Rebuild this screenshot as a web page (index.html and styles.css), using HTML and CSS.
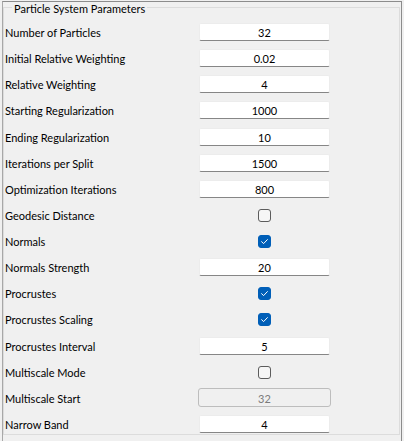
FILE: index.html
```
<!DOCTYPE html>
<html>
<head>
<meta charset="utf-8">
<link rel="stylesheet" href="styles.css">
</head>
<body>
<div class="scroll">
  <fieldset class="group">
    <legend class="title">Particle System Parameters</legend>
    <div class="rows">
      <label class="lbl">Number of Particles</label><div class="num">32</div>
      <label class="lbl">Initial Relative Weighting</label><div class="num">0.02</div>
      <label class="lbl">Relative Weighting</label><div class="num">4</div>
      <label class="lbl">Starting Regularization</label><div class="num">1000</div>
      <label class="lbl">Ending Regularization</label><div class="num">10</div>
      <label class="lbl">Iterations per Split</label><div class="num">1500</div>
      <label class="lbl">Optimization Iterations</label><div class="num">800</div>
      <label class="lbl">Geodesic Distance</label><div class="cbcell"><span class="cb"></span></div>
      <label class="lbl">Normals</label><div class="cbcell"><span class="cb on"><svg viewBox="0 0 13 13" width="13" height="13"><path d="M3.6 6.7 L5.6 8.6 L9.4 4.6" fill="none" stroke="#fff" stroke-width="1" stroke-linecap="round" stroke-linejoin="round"/></svg></span></div>
      <label class="lbl">Normals Strength</label><div class="num">20</div>
      <label class="lbl">Procrustes</label><div class="cbcell"><span class="cb on"><svg viewBox="0 0 13 13" width="13" height="13"><path d="M3.6 6.7 L5.6 8.6 L9.4 4.6" fill="none" stroke="#fff" stroke-width="1" stroke-linecap="round" stroke-linejoin="round"/></svg></span></div>
      <label class="lbl">Procrustes Scaling</label><div class="cbcell"><span class="cb on"><svg viewBox="0 0 13 13" width="13" height="13"><path d="M3.6 6.7 L5.6 8.6 L9.4 4.6" fill="none" stroke="#fff" stroke-width="1" stroke-linecap="round" stroke-linejoin="round"/></svg></span></div>
      <label class="lbl">Procrustes Interval</label><div class="num">5</div>
      <label class="lbl">Multiscale Mode</label><div class="cbcell"><span class="cb"></span></div>
      <label class="lbl">Multiscale Start</label><div class="num disabled">32</div>
      <label class="lbl">Narrow Band</label><div class="num">4</div>
    </div>
  </fieldset>
</div>
</body>
</html>
```
FILE: styles.css
```
html, body {
  margin: 0;
  padding: 0;
  background: #f0f0f0;
  overflow: hidden;
}
body {
  font: 11px "Lato", sans-serif;
  color: #000;
  padding-top: 1px;
}
.scroll {
  margin-left: 2px;
  width: 400px;
  height: 460px;
  box-sizing: border-box;
  border: 1px solid #8c8c8c;
  border-left-color: #a8a8a8;
}
.group {
  margin: -2px 1px 0 0;
  padding: 9px 0 1px 1px;
  border: 1px solid #dcdcdc;
  min-width: 0;
}
.title {
  margin-left: 7px;
  padding: 4px 2px 0;
  line-height: 10px;
  font-size: 11px;
  color: #000;
}
.rows {
  display: grid;
  grid-template-columns: 194px 131px;
  grid-auto-rows: 18px;
  row-gap: 8.13px;
}
.lbl {
  align-self: center;
  white-space: nowrap;
  line-height: 14px;
  padding-top: 2px;
}
.num {
  box-sizing: border-box;
  width: 131px;
  height: 18px;
  background: #fff;
  border: 1px solid #ececec;
  border-bottom-color: #868686;
  border-radius: 2px;
  text-align: center;
  line-height: 14px;
  padding-top: 2px;
  color: #000;
}
.num.disabled {
  background: #f0f0f0;
  border-color: #bdbdbd;
  border-radius: 3px;
  color: #7c7c7c;
  width: 133px;
  height: 19px;
  margin: -1px 0 0 -1px;
  line-height: 15px;
}
.cbcell {
  display: flex;
  align-items: center;
  justify-content: center;
}
.cb {
  box-sizing: border-box;
  width: 13px;
  height: 13px;
  border: 1px solid #5c5c5c;
  border-radius: 3px;
  background: #f6f6f6;
  margin-top: 1px;
}
.cb.on {
  background: #005fb8;
  border-color: #005fb8;
}
.cb svg {
  display: block;
  margin: -1px;
}
```
